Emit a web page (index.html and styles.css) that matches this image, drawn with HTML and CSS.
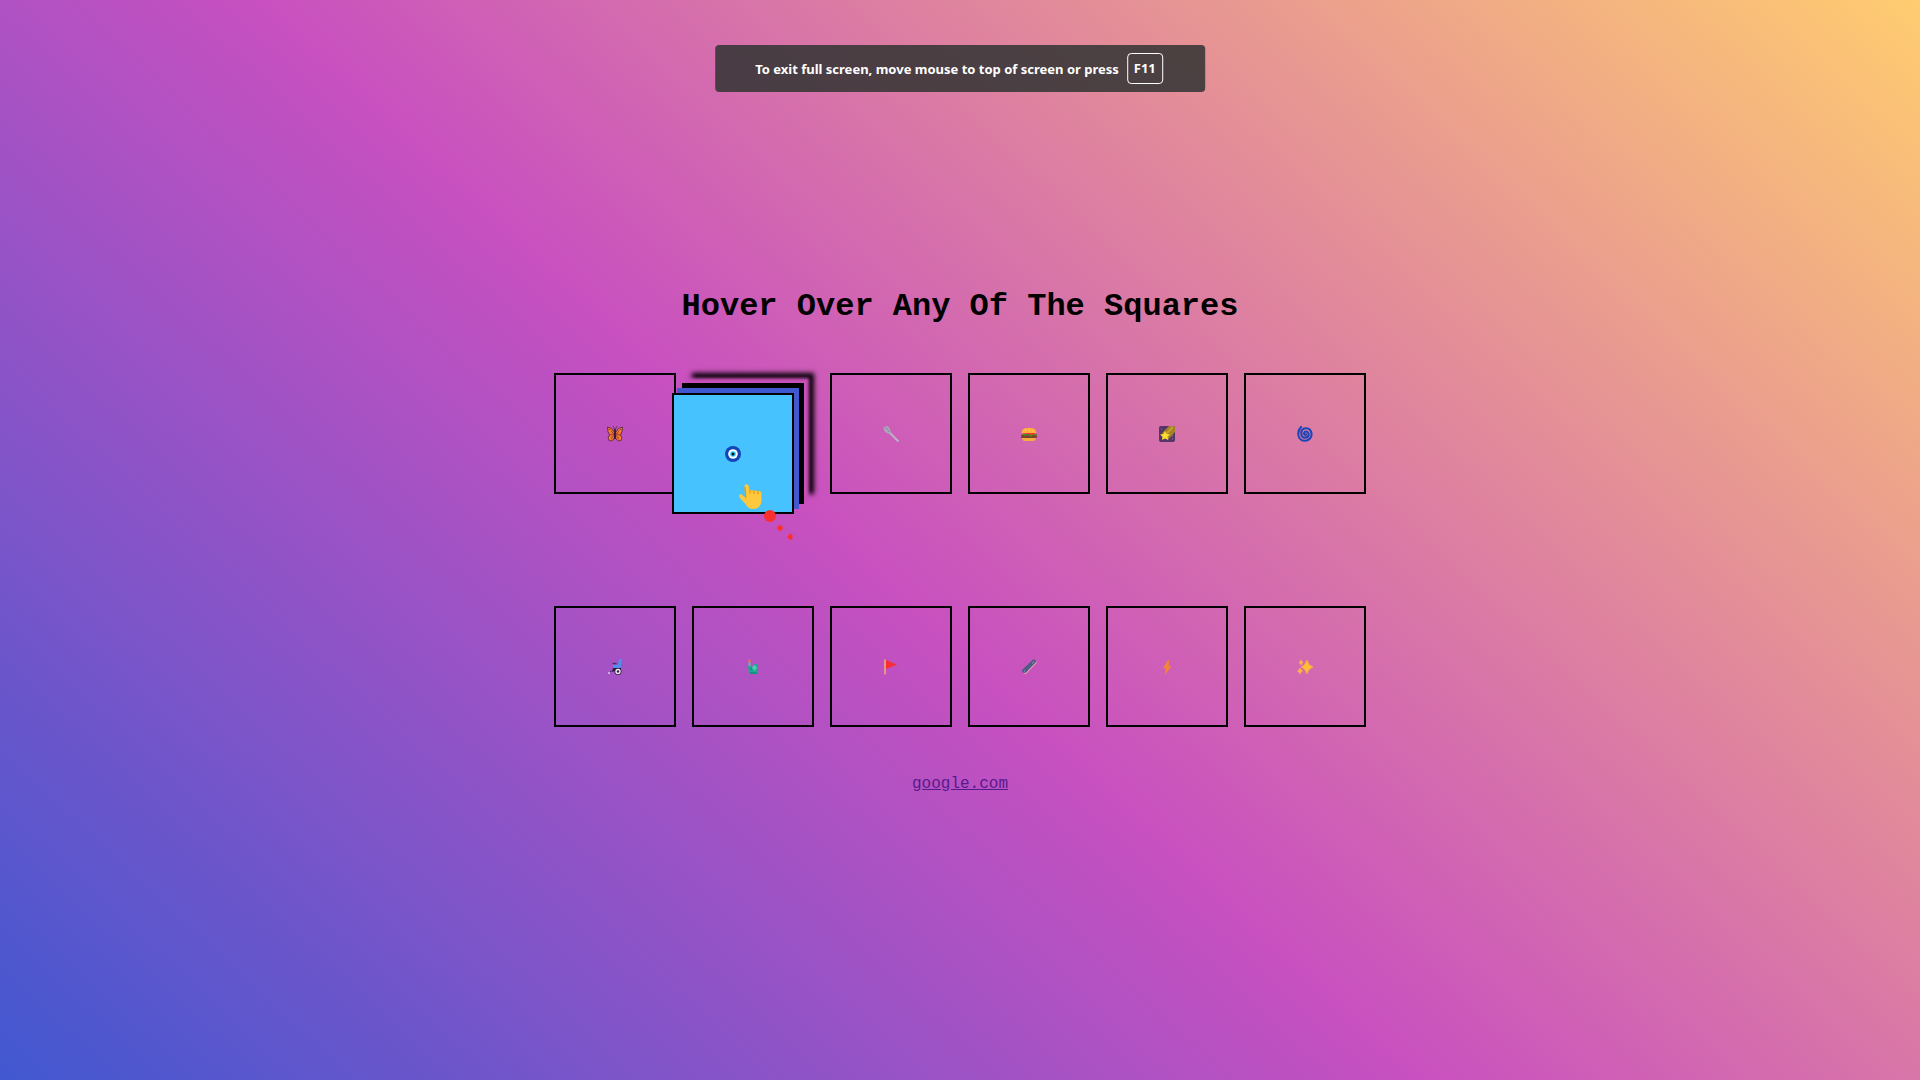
FILE: index.html
```html
<!DOCTYPE html>
<html lang="en">
<head>
<meta charset="utf-8">
<meta name="viewport" content="width=device-width, initial-scale=1">
<title>Hover Squares</title>
<link rel="stylesheet" href="styles.css">
</head>
<body>
<div class="notice" role="status">
  <span>To exit full screen, move mouse to top of screen or press</span>
  <kbd class="key">F11</kbd>
</div>
<main class="page">
  <h1 class="title">Hover Over Any Of The Squares</h1>
  <div class="board">
    <div class="square">
      <svg class="icon" viewBox="0 0 16 16"><path d="M.5 1Q5 1 7.500 6.500L8 9 7 13q-2 3-5 1.500Q0 12 2.500 9 .5 6 .5 1zm15 0Q11 1 8.500 6.500L8 9l1 4q2 3 5 1.500Q16 12 13.500 9q2-3 2-8z" fill="#f3722c" stroke="#4b2441" stroke-width=".8"/><path d="M2 3l5 5-4.500 1M14 3L9 8l4.500 1M7 9l-3 4m5-4l3 4" fill="none" stroke="#7b2c35" stroke-width=".7"/><path d="M8 3v10" stroke="#321b41" stroke-width="1.800"/><path d="M8 4L6 0m2 4l2-4" stroke="#4b2441" stroke-width=".7"/><g fill="#ffb02e"><circle cx="3" cy="5" r=".7"/><circle cx="13" cy="5" r=".7"/><circle cx="3" cy="12" r=".7"/><circle cx="13" cy="12" r=".7"/></g></svg>
    </div>
    <div class="square square-active">
      <svg class="icon" viewBox="0 0 16 16"><circle cx="8" cy="8" r="8" fill="#1345b7"/><circle cx="8" cy="8" r="4.800" fill="#fff"/><circle cx="8" cy="8" r="2.800" fill="#26c9fc"/><circle cx="8" cy="8" r="1.500" fill="#15171c"/></svg>
      <svg class="pointer" viewBox="0 0 56 56"><path d="M5.500 2C5.500-.5 9.500-.5 9.700 2L10.500 6 20 7c2 0 2.500 2 2.500 4v5c0 5-3 9-8 9-4 0-6.500-2-8-5L1 14c-2-3 0-4.500 2-3.300L6 13z" fill="#ffc83d"/><path d="M6 3l.8 11M11 6v3.500m4-3V10m4-3.500V10" fill="none" stroke="#d67d00" stroke-width=".8"/><circle cx="31" cy="32" r="6" fill="#f8312f"/><path d="M41 40.500l3.500 3.500-3.500 3.500-3.500-3.500z" fill="#f8312f"/><path d="M51 49.500l2.500 1.500v4L51 56l-3-3z" fill="#f8312f"/></svg>
    </div>
    <div class="square">
      <svg class="icon" viewBox="0 0 16 16"><path d="M6 6l9 9" stroke="#b9b2c9" stroke-width="2" stroke-linecap="round"/><path d="M.5 2Q2-.5 5 .5 7.500 2 7.500 6q-.5 1.500-2 1.500Q1 6.500 .5 2z" fill="#ada7bc"/><path d="M2 2q3 0 4 4" fill="none" stroke="#8e86a5"/></svg>
    </div>
    <div class="square">
      <svg class="icon" viewBox="0 0 16 16"><path d="M1 11h14q0 4-3 4H4q-3 0-3-4z" fill="#f5ae3a"/><rect y="9" width="16" height="3" rx="1" fill="#7d3f32"/><path d="M0 8h16l-1 2-3-1-2 2-3-2-3 1z" fill="#44911b"/><path d="M1 7h14l-4 2z" fill="#f8312f"/><path d="M.5 7Q1 2 6 2h4q5 0 5.500 5z" fill="#ffb03b"/><path d="M4 4h1m3 0h1m2 1h1" stroke="#ffe29a"/></svg>
    </div>
    <div class="square">
      <svg class="icon" viewBox="0 0 16 16"><rect width="16" height="16" rx="2" fill="#533566"/><path d="M3 7L10 0h4q2 0 2 2v4l-7 8z" fill="#a38228"/><path d="M6 9l8-8" stroke="#c3a12d" stroke-width="2"/><path d="M6 5l1.500 3 3.500.4-2.500 2.300.7 3.300L6 12.500 3 14l.5-3.300L1 8.400 4.500 8z" fill="#ffdf2d"/><path d="M2 3h1m10 10h1m-1-3h1" stroke="#9b72b4"/></svg>
    </div>
    <div class="square">
      <svg class="icon" viewBox="0 0 16 16"><path d="M4 1Q1 4 1.300 8.500C1.800 13 5 15 8.500 14.800c4-.3 6.300-3.500 6-7.300C14 4 11.500 2 8.500 2.200 5.500 2.500 4 4.800 4.300 7.800c.3 2.700 2.200 4 4.300 3.800 2-.2 3.200-1.800 3-3.800C11.400 6.200 10 5.300 8.600 5.500 7 5.800 6.500 7.500 7.500 8.500q1 .8 1.500-.2" fill="none" stroke="#1c46b8" stroke-width="2.100" stroke-linecap="round"/></svg>
    </div>
  </div>
  <div class="board">
    <div class="square">
      <svg class="icon" viewBox="0 0 16 16"><path d="M12 0h3l-1.500 9H6V6h5z" fill="#4b91ed"/><path d="M5.500 4.500h4" stroke="#493260" stroke-width="1.400"/><path d="M6 9h8v3H8l-3 1z" fill="#321b41"/><circle cx="11" cy="12.500" r="3.500" fill="#321b41"/><circle cx="11" cy="12.500" r="2" fill="none" stroke="#eee" stroke-width="1.400"/><path d="M6 11l-3 2" stroke="#493260"/><circle cx="2" cy="14" r="1" fill="#d8c7e2"/></svg>
    </div>
    <div class="square">
      <svg class="icon" viewBox="0 0 16 16"><path d="M4.500 3v7" stroke="#61b9ad" stroke-width="2"/><path d="M4.500 0L6 2 4.500 4 3 2z" fill="#ff653b"/><path d="M3 7h3l2 1V5h4l1 2-1 2 1 3-1 3H4z" fill="#20a78e"/><path d="M7 9l2-3 3 2-2 4z" fill="#49cdaf"/><path d="M5 14h7m-7-4h2" stroke="#087f6f"/></svg>
    </div>
    <div class="square">
      <svg class="icon" viewBox="0 0 16 16"><path d="M2 .500v15" stroke="#e19a85" stroke-width="2"/><path d="M3 1l11 4.800L3 10z" fill="#f92f35"/></svg>
    </div>
    <div class="square">
      <svg class="icon" viewBox="0 0 16 16"><path d="M2 13.500L14 2.500q2-1 1.500 1.500L6 14q-3 2-4-.5z" fill="#e1a5aa"/><path d="M1 11L12 .500q3-1 3 2.500L5 13.500q-4 1.500-4-2.500z" fill="#515a87"/><path d="M3 12h1m8-9h1m-2 1h1" stroke="#8e9abb"/></svg>
    </div>
    <div class="square">
      <svg class="icon" viewBox="0 0 16 16"><path d="M9.500 1L4 9h3l-1 6.500L12 7.500H9.500L10 1z" fill="#f58538" stroke="#f58538" stroke-width=".5"/></svg>
    </div>
    <div class="square">
      <svg class="icon" viewBox="0 0 16 16"><path d="M10 1q1 5.500 6 7-5 1.500-6 7-1.500-5.500-6-7 4.500-1.500 6-7zM4 1q.5 2 2 2.500Q4.500 4 4 6q-.5-2-2-2.500Q3.500 3 4 1zM3 9q.5 2.500 2.500 3Q3.500 12.500 3 15q-.5-2.500-2.500-3Q2.500 11.500 3 9z" fill="#ffbd38" stroke="#ffbd38" stroke-width=".6"/></svg>
    </div>
  </div>
  <a class="link" href="https://google.com">google.com</a>
</main>
</body>
</html>
```
FILE: styles.css
```css
* {
  box-sizing: border-box;
}

body {
  margin: 0;
  min-height: 100vh;
  color: #000;
  font-family: "Courier New", "Liberation Mono", monospace;
  font-size: 16px;
  background: linear-gradient(43deg, #4158d0 0%, #c850c0 46%, #ffcc70 100%) no-repeat;
}

/* Full-screen hint, floats over the page */
.notice {
  position: absolute;
  top: 45px;
  left: 50%;
  transform: translateX(-50%);
  display: flex;
  align-items: center;
  gap: 8px;
  padding: 8px 42px 8px 40px;
  border-radius: 4px;
  background: rgba(54, 54, 54, 0.88);
  color: #fff;
  font: bold 13px/20px "Noto Sans", "Open Sans", sans-serif;
  white-space: nowrap;
}

.key {
  padding: 4px 6px;
  border: 1px solid #fff;
  border-radius: 4px;
  font: inherit;
  line-height: 21px;
}

.page {
  display: flex;
  flex-direction: column;
  align-items: center;
  justify-content: center;
  min-height: 100vh;
  padding: 2px 16px 0;
}

.title {
  margin: 0 0 48px;
  font-size: 32px;
  line-height: 36px;
  text-align: center;
}

.board {
  display: grid;
  grid-template-columns: repeat(6, 1fr);
  gap: 16px;
  width: 100%;
  max-width: 812px;
}

.board + .board {
  margin-top: 112px;
}

.square {
  display: flex;
  align-items: center;
  justify-content: center;
  height: 121px;
  border: 2px solid #000;
}

.square-active {
  position: relative;
  z-index: 1;
  transform: translate(-20px, 20px);
  background: #46c2ff;
  box-shadow:
    5px -5px #4158d0,
    10px -10px #000,
    15px -15px 3px #c850b9,
    20px -20px 5px #000;
}

.icon {
  width: 16px;
  height: 16px;
}

.pointer {
  position: absolute;
  top: 89px;
  left: 65px;
  width: 56px;
  height: 56px;
}

.link {
  margin-top: 48px;
  color: #551a8b;
  line-height: 18px;
}
```
